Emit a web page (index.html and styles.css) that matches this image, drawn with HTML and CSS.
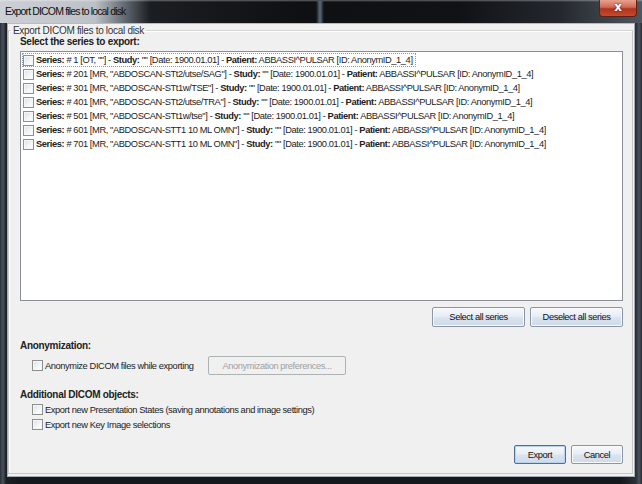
FILE: index.html
```html
<!DOCTYPE html>
<html>
<head>
<meta charset="utf-8">
<link rel="stylesheet" href="styles.css">
</head>
<body>
<div class="window">
  <div class="titlebar">
    <div class="title">Export DICOM files to local disk</div>
    <div class="streak"></div>
    <div class="close"><span>x</span></div>
  </div>
  <div class="client">
    <fieldset class="group">
      <legend>Export DICOM files to local disk</legend>
      <div class="section-label">Select the series to export:</div>
      <div class="list">
        <div class="row focus"><span class="cb"></span><span class="txt"><b>Series:</b> # 1 [OT, ""] - <b>Study:</b> "" [Date: 1900.01.01] - <b>Patient:</b> ABBASSI^PULSAR [ID: AnonymID_1_4]</span></div>
        <div class="row"><span class="cb"></span><span class="txt"><b>Series:</b> # 201 [MR, "ABDOSCAN-STt2/utse/SAG"] - <b>Study:</b> "" [Date: 1900.01.01] - <b>Patient:</b> ABBASSI^PULSAR [ID: AnonymID_1_4]</span></div>
        <div class="row"><span class="cb"></span><span class="txt"><b>Series:</b> # 301 [MR, "ABDOSCAN-STt1w/TSE"] - <b>Study:</b> "" [Date: 1900.01.01] - <b>Patient:</b> ABBASSI^PULSAR [ID: AnonymID_1_4]</span></div>
        <div class="row"><span class="cb"></span><span class="txt"><b>Series:</b> # 401 [MR, "ABDOSCAN-STt2/utse/TRA"] - <b>Study:</b> "" [Date: 1900.01.01] - <b>Patient:</b> ABBASSI^PULSAR [ID: AnonymID_1_4]</span></div>
        <div class="row"><span class="cb"></span><span class="txt"><b>Series:</b> # 501 [MR, "ABDOSCAN-STt1w/tse"] - <b>Study:</b> "" [Date: 1900.01.01] - <b>Patient:</b> ABBASSI^PULSAR [ID: AnonymID_1_4]</span></div>
        <div class="row"><span class="cb"></span><span class="txt"><b>Series:</b> # 601 [MR, "ABDOSCAN-STT1 10 ML OMN"] - <b>Study:</b> "" [Date: 1900.01.01] - <b>Patient:</b> ABBASSI^PULSAR [ID: AnonymID_1_4]</span></div>
        <div class="row"><span class="cb"></span><span class="txt"><b>Series:</b> # 701 [MR, "ABDOSCAN-STT1 10 ML OMN"] - <b>Study:</b> "" [Date: 1900.01.01] - <b>Patient:</b> ABBASSI^PULSAR [ID: AnonymID_1_4]</span></div>
      </div>
      <div class="list-buttons">
        <button class="btn wide">Select all series</button>
        <button class="btn wide">Deselect all series</button>
      </div>
      <div class="section-label anon-label">Anonymization:</div>
      <div class="anon-row">
        <label class="check"><span class="cb"></span>Anonymize DICOM files while exporting</label>
        <button class="btn disabled">Anonymization preferences...</button>
      </div>
      <div class="section-label add-label">Additional DICOM objects:</div>
      <label class="check opt"><span class="cb"></span>Export new Presentation States (saving annotations and image settings)</label>
      <label class="check opt"><span class="cb"></span>Export new Key Image selections</label>
      <div class="footer">
        <button class="btn small default">Export</button>
        <button class="btn small">Cancel</button>
      </div>
    </fieldset>
  </div>
</div>
</body>
</html>
```

FILE: styles.css
```css
html, body {
  margin: 0;
  padding: 0;
  background: #101214;
}
.window {
  width: 642px;
  height: 484px;
  box-sizing: border-box;
  background: linear-gradient(90deg, #2a3038 0px, #4a525c 3px, #1c2026 6px, #15181c 20px, #15181c 620px, #2b3038 636px, #4b525a 639px, #2a2e34 642px);
  display: flex;
  flex-direction: column;
  font-family: "Liberation Sans", Arial, sans-serif;
  font-size: 10px;
  color: #000;
}
.titlebar {
  height: 23px;
  position: relative;
  display: flex;
  align-items: flex-start;
  background:
    linear-gradient(180deg, rgba(255,255,255,0.35) 0px, rgba(255,255,255,0) 2px),
    linear-gradient(90deg, #cdd1d6 0px, #bcc1c7 95px, #5a6068 128px, #1b1e22 150px, #0e1013 300px, #101216 460px, #24282e 560px, #3a3f46 600px, #505660 642px);
}
.title {
  padding: 5px 0 0 5px;
  font-size: 10.5px;
  letter-spacing: -0.85px;
  color: #111;
}
.streak {
  position: absolute;
  left: 316px;
  top: 1px;
  width: 8px;
  height: 22px;
  background: linear-gradient(90deg, rgba(120,150,170,0), rgba(140,170,190,0.6), rgba(120,150,170,0));
}
.close {
  position: absolute;
  right: 5px;
  top: 0;
  width: 38px;
  height: 17px;
  box-sizing: border-box;
  border: 1px solid #5a2318;
  border-top: none;
  border-radius: 0 0 4px 4px;
  background: linear-gradient(180deg, #e8a290 0%, #d06a52 45%, #b0341c 55%, #c84a2c 100%);
  display: flex;
  align-items: center;
  justify-content: center;
}
.close span {
  color: #fff;
  font-family: "DejaVu Sans", sans-serif;
  font-weight: bold;
  font-size: 12px;
  line-height: 12px;
  margin-top: -2px;
  text-shadow: 0 0 2px #600;
}
.client {
  margin: 0 7px 7px 7px;
  flex: 1;
  background: #f0f0f0;
  border: 1px solid #a6acb4;
  border-top-color: #b8bcc2;
  display: flex;
  padding: 0;
}
.group {
  flex: 1;
  margin: 1px 1px 2px 0;
  padding: 0 9px 0 11px;
  border: 1px solid #c8c8c8;
  border-top-color: #d4d4d4;
  box-shadow: inset 1px 1px 0 #fff;
  display: flex;
  flex-direction: column;
  min-width: 0;
}
.group legend {
  padding: 0 2px;
  margin-left: -9px;
  color: #333;
  font-size: 10px;
  letter-spacing: -0.3px;
}
.section-label {
  font-weight: bold;
  font-size: 10px;
  letter-spacing: -0.3px;
  color: #222;
  line-height: 12px;
}
.list {
  margin-top: 3px;
  height: 247px;
  background: #fff;
  border: 1px solid #8c9096;
  padding: 1px 0 0 1px;
  display: flex;
  flex-direction: column;
}
.row {
  display: flex;
  align-items: center;
  height: 14px;
  white-space: nowrap;
  align-self: flex-start;
  box-sizing: border-box;
  border: 1px solid transparent;
  padding-right: 2px;
}
.row.focus {
  border: 1px dotted #8c9ab0;
}
.cb {
  width: 11px;
  height: 11px;
  box-sizing: border-box;
  border: 1px solid #8e8f8f;
  background: linear-gradient(135deg, #dcdfe4 0%, #f4f6f8 60%, #ffffff 100%);
  box-shadow: inset 0 0 0 1px #f6f7f9;
  flex: none;
  margin-right: 2px;
}
.txt, .check, .btn {
  font-family: "Liberation Sans", Arial, sans-serif;
  font-size: 9.3px;
  letter-spacing: -0.4px;
  color: #222;
}
.txt b {
  font-weight: bold;
}
.list-buttons {
  display: flex;
  justify-content: flex-end;
  gap: 5px;
  margin-top: 6px;
}
.btn {
  color: #111;
  border: 1px solid #8a96a6;
  border-radius: 2px;
  background: linear-gradient(180deg, #f6f8fb 0%, #e8eef5 45%, #d9e3ee 55%, #cfdbe8 100%);
  box-shadow: inset 0 0 0 1px #f8fafc;
  padding: 0;
  height: 20px;
}
.btn.wide {
  width: 93px;
}
.btn.disabled {
  width: 138px;
  height: 19px;
  background: #f0f0f0;
  border-color: #adb2b5;
  color: #a0a0a0;
  box-shadow: none;
}
.btn.small {
  width: 52px;
  height: 19px;
}
.btn.default {
  border-color: #4f6f9a;
  box-shadow: inset 0 0 0 1px #b8d2ee;
}
.anon-label {
  margin-top: 13px;
}
.anon-row {
  display: flex;
  align-items: center;
  margin-top: 4px;
  padding-left: 12px;
}
.anon-row .check {
  width: 176px;
}
.check {
  display: flex;
  align-items: center;
  white-space: nowrap;
  height: 15px;
}
.check .cb {
  margin-right: 2px;
}
.add-label {
  margin-top: 14px;
}
.opt {
  padding-left: 12px;
  margin-top: 1px;
}
.opt + .opt {
  margin-top: 0;
}
.footer {
  display: flex;
  justify-content: flex-end;
  gap: 5px;
  margin-top: 13px;
}
```
